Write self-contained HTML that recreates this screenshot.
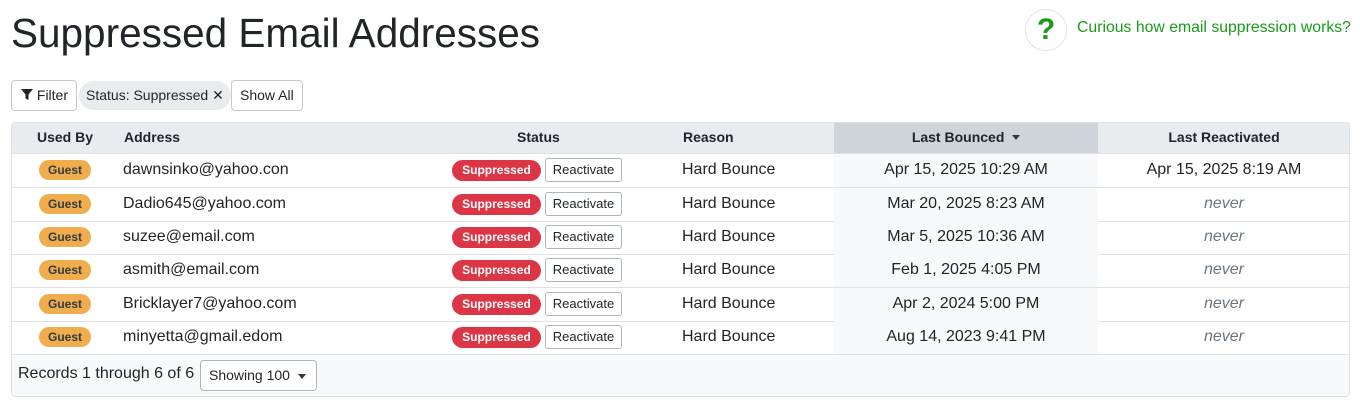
<!DOCTYPE html>
<html><head><style>
*{box-sizing:border-box;margin:0;padding:0}
body{width:1360px;height:413px;background:#fff;font-family:"Liberation Sans",Arial,sans-serif;color:#212529;position:relative;overflow:hidden}
.abs{position:absolute}
h1{position:absolute;left:11px;top:10px;font-size:40.5px;font-weight:400;line-height:46px;color:#212529}
.help{left:1025px;top:9px;width:42px;height:42px;border:1px solid #dee2e6;border-radius:50%;text-align:center;line-height:40px;font-size:30px;font-weight:700;color:#1a9a1a}
.helpt{left:1077px;top:19px;font-size:15.8px;color:#1a9a1a}
.btn{top:80px;height:31px;border:1px solid #c4c8cc;border-radius:4px;font-size:14px;line-height:29px;background:#fff;padding:0 8px}
.chip{left:79px;top:81px;height:29px;background:#e9ecef;border-radius:15px;font-size:14px;line-height:28px;padding:0 7px}
.tbl{left:11px;top:122px;width:1339px;height:275px;border:1px solid #dee2e6;border-radius:4px;overflow:hidden}
.hdr{position:absolute;left:0;top:0;width:1339px;height:31px;background:#e9ecef;border-bottom:1px solid #dee2e6;font-size:14px;font-weight:700;line-height:29px}
.row{position:absolute;left:0;width:1339px;height:34px;border-bottom:1px solid #dee2e6;font-size:16px;line-height:31px}
.c{position:absolute;top:0}
.guest{position:absolute;left:27px;top:6px;width:52px;height:20px;background:#f0ad4e;border-radius:10px;font-size:12px;font-weight:700;line-height:20px;text-align:center;color:#343a40}
.sup{position:absolute;left:440px;top:6px;width:89px;height:21px;background:#dc3545;border-radius:11px;color:#fff;font-size:12px;font-weight:700;line-height:21px;text-align:center}
.rea{position:absolute;left:533px;top:4px;width:77px;height:24px;border:1px solid #adb5bd;border-radius:3px;font-size:13px;line-height:22px;text-align:center;background:#fff}
.lb{position:absolute;left:822px;top:0;width:264px;height:100%;background:#f8f9fa;text-align:center}
.lr{position:absolute;left:1086px;width:252px;text-align:center}
.nv{color:#6c757d;font-style:italic}
.foot{position:absolute;left:0;top:232px;width:1339px;height:43px;background:#f8f9fa;font-size:16px}
.caret{display:inline-block;width:0;height:0;border-left:4px solid transparent;border-right:4px solid transparent;border-top:5px solid #343a40;vertical-align:2px}
</style></head><body>
<h1>Suppressed Email Addresses</h1>
<div class="abs help">?</div>
<div class="abs helpt">Curious how email suppression works?</div>
<div class="abs btn" style="left:11px;padding:0 8px 0 9px"><svg width="12" height="12" viewBox="0 0 12 12" style="vertical-align:-1px"><path d="M0 0H12L7.5 5.5V11L4.5 9.5V5.5Z" fill="#212529"/></svg> Filter</div>
<div class="abs chip">Status: Suppressed ✕</div>
<div class="abs btn" style="left:231px">Show All</div>
<div class="abs tbl">
<div class="hdr">
<div class="lb" style="background:#ced4da">Last Bounced &nbsp;<span class="caret"></span></div>
<div class="c" style="left:25px">Used By</div>
<div class="c" style="left:112px">Address</div>
<div class="c" style="left:505px">Status</div>
<div class="c" style="left:671px">Reason</div>
<div class="lr">Last Reactivated</div>
</div>
<div class="row" style="top:31px"><div class="lb">Apr 15, 2025 10:29 AM</div><div class="guest">Guest</div><div class="c" style="left:111px">dawnsinko@yahoo.con</div><div class="sup">Suppressed</div><div class="rea">Reactivate</div><div class="c" style="left:670px">Hard Bounce</div><div class="lr">Apr 15, 2025 8:19 AM</div></div>
<div class="row" style="top:65px"><div class="lb">Mar 20, 2025 8:23 AM</div><div class="guest">Guest</div><div class="c" style="left:111px">Dadio645@yahoo.com</div><div class="sup">Suppressed</div><div class="rea">Reactivate</div><div class="c" style="left:670px">Hard Bounce</div><div class="lr nv">never</div></div>
<div class="row" style="top:98px"><div class="lb">Mar 5, 2025 10:36 AM</div><div class="guest">Guest</div><div class="c" style="left:111px">suzee@email.com</div><div class="sup">Suppressed</div><div class="rea">Reactivate</div><div class="c" style="left:670px">Hard Bounce</div><div class="lr nv">never</div></div>
<div class="row" style="top:131px"><div class="lb">Feb 1, 2025 4:05 PM</div><div class="guest">Guest</div><div class="c" style="left:111px">asmith@email.com</div><div class="sup">Suppressed</div><div class="rea">Reactivate</div><div class="c" style="left:670px">Hard Bounce</div><div class="lr nv">never</div></div>
<div class="row" style="top:165px"><div class="lb">Apr 2, 2024 5:00 PM</div><div class="guest">Guest</div><div class="c" style="left:111px">Bricklayer7@yahoo.com</div><div class="sup">Suppressed</div><div class="rea">Reactivate</div><div class="c" style="left:670px">Hard Bounce</div><div class="lr nv">never</div></div>
<div class="row" style="top:198px"><div class="lb">Aug 14, 2023 9:41 PM</div><div class="guest">Guest</div><div class="c" style="left:111px">minyetta@gmail.edom</div><div class="sup">Suppressed</div><div class="rea">Reactivate</div><div class="c" style="left:670px">Hard Bounce</div><div class="lr nv">never</div></div>
<div class="foot"><div class="c" style="left:6px;top:10px">Records 1 through 6 of 6</div>
<div class="c" style="left:188px;top:5px;width:117px;height:31px;border:1px solid #adb5bd;border-radius:4px;background:#fff;font-size:14px;line-height:29px;padding-left:8px">Showing 100 <span class="caret" style="position:absolute;right:10px;top:13px"></span></div></div>
</div>
</body></html>
